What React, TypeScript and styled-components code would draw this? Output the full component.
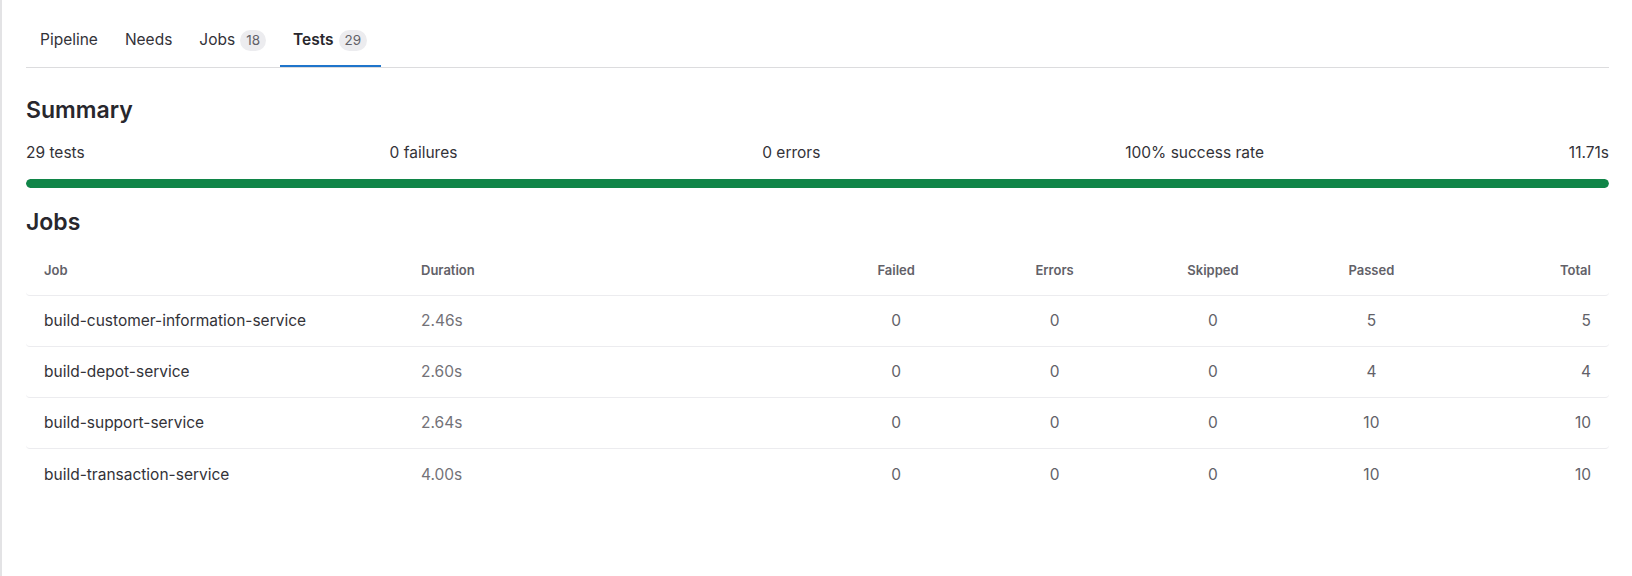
import React from 'react';
import styled, { createGlobalStyle } from 'styled-components';

const GlobalStyle = createGlobalStyle`
    body {
        margin: 0;
        background: #fff;
        color: #333238;
        font-family: Inter, "Noto Sans", "Liberation Sans", sans-serif;
        -webkit-font-smoothing: antialiased;
    }
`

const Page = styled.main`
    box-sizing: border-box;
    min-height: 100vh;
    border-left: 2px solid #e3e3e5;
    padding: 13px 23px 0 24px;
`
const TabList = styled.nav`
    display: flex;
    border-bottom: 1px solid #dcdcde;
`
const Tab = styled.a<{ $active?: boolean }>`
    display: flex;
    align-items: center;
    gap: 5px;
    height: 54px;
    padding: 0 13.5px;
    font-size: 15.5px;
    line-height: 20px;
    font-weight: ${p => (p.$active ? 600 : 400)};
    color: ${p => (p.$active ? '#28272d' : '#333238')};
    box-shadow: ${p => (p.$active ? 'inset 0 -2px 0 #1f75cb' : 'none')};
    cursor: pointer;
    &:first-child {
        padding-left: 14px;
    }
`
const Badge = styled.span`
    display: inline-flex;
    align-items: center;
    height: 21px;
    padding: 0 6px;
    border-radius: 999px;
    background: #ececef;
    color: #626168;
    font-size: 13.5px;
    font-weight: 400;
`
const Heading = styled.h2<{ $gap: number }>`
    margin: ${p => p.$gap}px 0 0;
    font-size: 23px;
    line-height: 32px;
    font-weight: 600;
    color: #28272d;
`
const Stats = styled.div`
    display: flex;
    justify-content: space-between;
    margin-top: 17px;
    font-size: 15.5px;
    line-height: 20px;
`
const Track = styled.div`
    margin-top: 16px;
    height: 9px;
    border-radius: 5px;
    background: #ececef;
    overflow: hidden;
`
const Fill = styled.div`
    height: 100%;
    background: #108548;
    border-radius: 5px;
`
const Table = styled.div`
    margin-top: 7px;
`
const Row = styled.div`
    display: grid;
    grid-template-columns: 377px 414px repeat(5, 1fr);
    align-items: center;
    height: 51px;
    box-sizing: border-box;
    border-bottom: 1px solid #ececef;
    border-radius: 0 0 4px 4px;
    &:last-child {
        border-bottom: none;
    }
`
const HeadCell = styled.div<{ $align: string }>`
    padding: 0 18px;
    text-align: ${p => p.$align};
    font-size: 13px;
    font-weight: 600;
    color: #626168;
`
const Cell = styled.div<{ $align: string; $tone: string }>`
    padding: 0 18px;
    text-align: ${p => p.$align};
    font-size: 15.5px;
    line-height: 20px;
    color: ${p => p.$tone};
`

const jobs = [
    { name: 'build-customer-information-service', duration: '2.46s', failed: 0, errors: 0, skipped: 0, passed: 5, total: 5 },
    { name: 'build-depot-service', duration: '2.60s', failed: 0, errors: 0, skipped: 0, passed: 4, total: 4 },
    { name: 'build-support-service', duration: '2.64s', failed: 0, errors: 0, skipped: 0, passed: 10, total: 10 },
    { name: 'build-transaction-service', duration: '4.00s', failed: 0, errors: 0, skipped: 0, passed: 10, total: 10 },
]

const columns = [
    { label: 'Job', align: 'left' },
    { label: 'Duration', align: 'left' },
    { label: 'Failed', align: 'center' },
    { label: 'Errors', align: 'center' },
    { label: 'Skipped', align: 'center' },
    { label: 'Passed', align: 'center' },
    { label: 'Total', align: 'right' },
]

export default function App() {
    const total = jobs.reduce((s, j) => s + j.total, 0)
    const passed = jobs.reduce((s, j) => s + j.passed, 0)
    const rate = Math.round((passed / total) * 100)

    return (
    <>
        <GlobalStyle />
        <Page>
            <TabList>
                <Tab>Pipeline</Tab>
                <Tab>Needs</Tab>
                <Tab>Jobs <Badge>18</Badge></Tab>
                <Tab $active>Tests <Badge>29</Badge></Tab>
            </TabList>

            <Heading $gap={26}>Summary</Heading>
            <Stats>
                <span>{total} tests</span>
                <span>0 failures</span>
                <span>0 errors</span>
                <span>{rate}% success rate</span>
                <span>11.71s</span>
            </Stats>
            <Track>
                <Fill style={{ width: `${rate}%` }} />
            </Track>

            <Heading $gap={18}>Jobs</Heading>
            <Table>
                <Row>
                    {columns.map(c => (
                        <HeadCell key={c.label} $align={c.align}>{c.label}</HeadCell>
                    ))}
                </Row>
                {jobs.map(j => (
                    <Row key={j.name}>
                        <Cell $align="left" $tone="#333238">{j.name}</Cell>
                        <Cell $align="left" $tone="#737278">{j.duration}</Cell>
                        <Cell $align="center" $tone="#626168">{j.failed}</Cell>
                        <Cell $align="center" $tone="#626168">{j.errors}</Cell>
                        <Cell $align="center" $tone="#626168">{j.skipped}</Cell>
                        <Cell $align="center" $tone="#626168">{j.passed}</Cell>
                        <Cell $align="right" $tone="#626168">{j.total}</Cell>
                    </Row>
                ))}
            </Table>
        </Page>
    </>
    );
}
